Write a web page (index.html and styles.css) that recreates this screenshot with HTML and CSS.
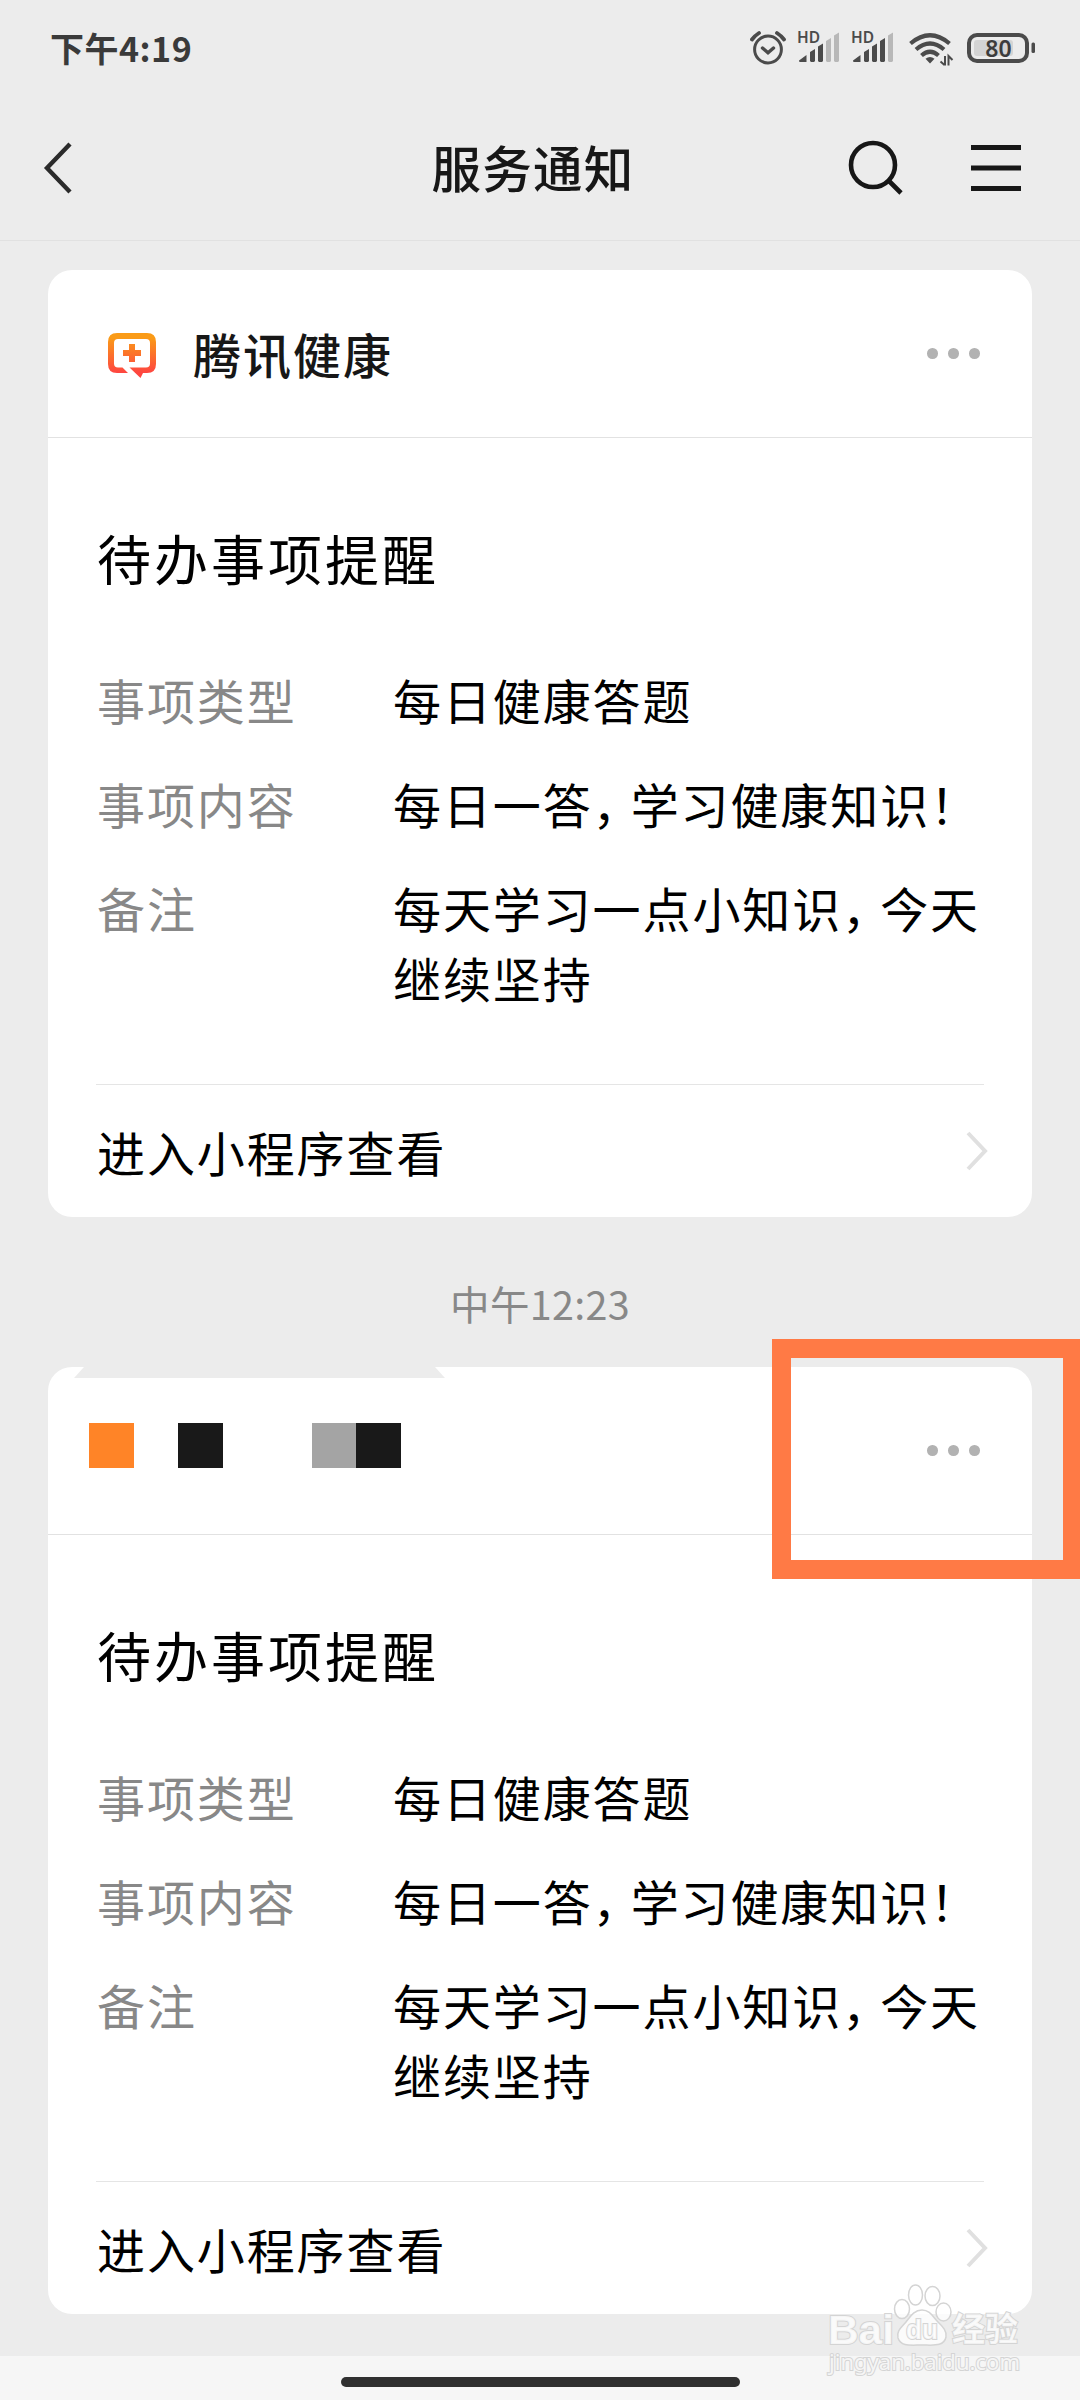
FILE: index.html
```html
<!DOCTYPE html>
<html lang="zh-CN">
<head>
<meta charset="utf-8">
<title>服务通知</title>
<link rel="stylesheet" href="styles.css">
</head>
<body>
<div class="screen">
  <header class="top">
    <div class="status">
      <span class="clock">下午4:19</span>
      <svg class="status-icons" viewBox="750 26 290 44" width="290" height="44">
        <g fill="none" stroke="#4b4b4b" stroke-width="3.4" stroke-linecap="round">
          <circle cx="768" cy="49.5" r="13.4" stroke-width="3"/>
          <path d="M762.5 48l5.5 4.8 5.5-4.8"/>
          <path d="M752 39.5q3-4 7-6.5M784 39.5q-3-4-7-6.5" stroke-width="3.8"/>
        </g>
        <g class="hd"><text x="797" y="43" textLength="23">HD</text><text x="851" y="43" textLength="23">HD</text></g>
        <g fill="#4b4b4b">
          <path d="M799 60.500l7.500-5.500v7h-6.500q-1 0-1-1.500z"/>
          <path d="M810 52l5-3v12l-1 1h-3l-1-1zM818 46.500l5-3v17.500l-1 1h-3l-1-1z"/>
          <path d="M826 41l5-3v23l-1 1h-3l-1-1zM834 35.500l5-3v28.500l-1 1h-3l-1-1z" fill="#b8b8b8"/>
          <path d="M853 60.500l7.500-5.500v7h-6.500q-1 0-1-1.500zM864 52l5-3v12l-1 1h-3l-1-1zM872 46.500l5-3v17.500l-1 1h-3l-1-1zM880 41l5-3v23l-1 1h-3l-1-1z"/>
          <path d="M888 35.500l5-3v28.500l-1 1h-3l-1-1z" fill="#b8b8b8"/>
        </g>
        <g fill="none" stroke="#4b4b4b" stroke-width="4.200">
          <path d="M910.500 43.500q19.500-16.500 39 0"/>
          <path d="M916 49.500q14-12 28 0"/>
          <path d="M921.500 55.500q8.500-7.500 17 0"/>
        </g>
        <path d="M925.500 58.800q4.500-3.600 9 0l-4.500 4.600z" fill="#4b4b4b"/>
        <path d="M945 56v9.500M940.500 61.500l4 3.500M948.500 65.500v-9.500l4 4" fill="none" stroke="#4b4b4b" stroke-width="2"/>
        <rect x="969" y="35" width="58" height="26" rx="8" fill="none" stroke="#4b4b4b" stroke-width="4"/>
        <rect x="974" y="40" width="39" height="16" rx="3" fill="#d4d4d4"/>
        <rect x="1031.500" y="42.500" width="3.500" height="10.500" rx="1.500" fill="#4b4b4b"/>
        <text class="level" x="998.500" y="56.500" text-anchor="middle">80</text>
      </svg>
    </div>
    <nav class="nav">
      <svg class="back" width="34" height="56" viewBox="0 0 34 56"><path d="M29 4L6 28l23 24" fill="none" stroke="#2b2b2b" stroke-width="4.400"/></svg>
      <h1>服务通知</h1>
      <div class="tools">
        <svg width="56" height="56" viewBox="0 0 56 56"><g fill="none" stroke="#171717" stroke-width="4.600"><circle cx="25" cy="25" r="22"/><path d="M40.500 40.500l12.500 12.500"/></g></svg>
        <svg width="50" height="46" viewBox="0 0 50 46"><path d="M0 0h50v5H0zM0 20.400h50v5.200H0zM0 41h50v5H0z" fill="#171717"/></svg>
      </div>
    </nav>
  </header>

  <main class="feed">
    <article class="card">
      <div class="card-head">
        <svg class="logo" width="48" height="46" viewBox="0 0 48 46">
          <defs><linearGradient id="warm" gradientUnits="userSpaceOnUse" x1="0" y1="0" x2="0" y2="44"><stop offset="0.100" stop-color="#fa9b17"/><stop offset="0.900" stop-color="#fe4640"/></linearGradient></defs>
          <path fill="url(#warm)" fill-rule="evenodd" d="M9 0h30q9 0 9 9v22q0 9-9 9h-4l-2.500 5L21.500 34.500H38q4 0 4-4V10q0-4-4-4H10q-4 0-4 4v20.500q0 4 4 4h4.500l5.500 5.500H9q-9 0-9-9V9q0-9 9-9z"/>
          <path d="M21 11h6v6h6v6h-6v6h-6v-6h-6v-6h6z" fill="url(#warm)"/>
        </svg>
        <span class="sender">腾讯健康</span>
        <span class="more"><i></i><i></i><i></i></span>
      </div>
      <div class="card-body">
        <h2>待办事项提醒</h2>
        <dl>
          <dt>事项类型</dt><dd>每日健康答题</dd>
          <dt>事项内容</dt><dd>每日一答<span class="comma">，</span>学习健康知识！</dd>
          <dt>备注</dt><dd>每天学习一点小知识<span class="comma">，</span>今天<br>继续坚持</dd>
        </dl>
        <div class="enter"><span>进入小程序查看</span><svg width="24" height="42" viewBox="0 0 24 42"><path d="M3 3l17 18L3 39" fill="none" stroke="#e0e0e0" stroke-width="4"/></svg></div>
      </div>
    </article>

    <time>中午12:23</time>

    <article class="card">
      <div class="notch"></div>
      <div class="card-head masked">
        <div class="mosaic"><i class="orange"></i><i></i><i class="dark"></i><i></i><i></i><i class="gray"></i><i class="dark"></i></div>
        <span class="more"><i></i><i></i><i></i></span>
      </div>
      <div class="card-body">
        <h2>待办事项提醒</h2>
        <dl>
          <dt>事项类型</dt><dd>每日健康答题</dd>
          <dt>事项内容</dt><dd>每日一答<span class="comma">，</span>学习健康知识！</dd>
          <dt>备注</dt><dd>每天学习一点小知识<span class="comma">，</span>今天<br>继续坚持</dd>
        </dl>
        <div class="enter"><span>进入小程序查看</span><svg width="24" height="42" viewBox="0 0 24 42"><path d="M3 3l17 18L3 39" fill="none" stroke="#e0e0e0" stroke-width="4"/></svg></div>
      </div>
    </article>
  </main>

  <footer class="home"><span></span></footer>

  <div class="highlight"></div>
  <svg class="watermark" width="210" height="110" viewBox="820 2276 210 110">
    <g fill="#fff" fill-opacity=".8" stroke="#d4d4d4" stroke-width="1.500">
      <ellipse cx="902" cy="2309" rx="7.500" ry="9.500"/>
      <ellipse cx="915.500" cy="2295" rx="7" ry="10"/>
      <ellipse cx="932.500" cy="2296" rx="7.500" ry="9.500"/>
      <ellipse cx="943.500" cy="2312" rx="7.500" ry="9"/>
      <path d="M922 2310c8 0 11 7 16 12s9 9 8 15c-2 10-13 8-24 8s-21 2-24-7c-2-7 4-11 8-16s8-12 16-12z"/>
      <g class="wm-text">
        <text class="wm-brand" x="828" y="2344" textLength="66" lengthAdjust="spacingAndGlyphs">Bai</text>
        <text class="wm-du" x="906" y="2339" textLength="32" lengthAdjust="spacingAndGlyphs">du</text>
        <text class="wm-cn" x="952" y="2341" textLength="66">经验</text>
        <text class="wm-url" x="829" y="2370" textLength="191" lengthAdjust="spacingAndGlyphs">jingyan.baidu.com</text>
      </g>
    </g>
  </svg>
</div>
</body>
</html>
```
FILE: styles.css
```css
* { box-sizing: border-box; margin: 0; padding: 0; }

body {
  background: #ececec;
  font-family: "Noto Sans CJK SC", sans-serif;
  color: #000;
}

svg { display: block; }
i { display: block; }

.screen {
  position: relative;
  width: 1080px;
  height: 2400px;
  overflow: hidden;
  display: flex;
  flex-direction: column;
}

.top { height: 241px; border-bottom: 1px solid #e1e1e1; }

.status {
  height: 96px;
  padding: 0 40px 0 50px;
  display: flex;
  align-items: center;
  justify-content: space-between;
}

.clock { font-size: 34px; font-weight: 700; color: #3a3a3a; line-height: 50px; letter-spacing: 0.5px; }
.hd { font: 600 15.5px "Noto Sans", sans-serif; fill: #4b4b4b; }
.level { font: 600 23px "Noto Sans", sans-serif; fill: #3c3c3c; }

.nav {
  height: 144px;
  padding: 0 59px 0 41px;
  display: grid;
  grid-template-columns: 200px 1fr 200px;
  align-items: center;
}

.nav h1 {
  margin-bottom: 3px;
  padding-left: 4px;
  font-size: 49.5px;
  font-weight: 500;
  line-height: 60px;
  letter-spacing: 1.2px;
  text-align: center;
  color: #171717;
}

.tools { display: flex; align-items: center; justify-content: flex-end; gap: 67px; }

.feed { flex: 1; padding: 29px 48px 0; }

.card {
  position: relative;
  height: 947px;
  border-radius: 24px;
  background: #fff;
}

.card-head {
  height: 168px;
  padding: 0 52px 0 60px;
  border-bottom: 1px solid #e2e2e2;
  display: flex;
  align-items: center;
}

.logo { margin-top: 4px; }

.sender {
  margin: 0 0 2px 37px;
  font-size: 48px;
  font-weight: 500;
  line-height: 60px;
  letter-spacing: 2px;
  color: #171717;
}

.more { margin-left: auto; display: flex; gap: 10.4px; }
.more i { width: 10.6px; height: 10.6px; border-radius: 50%; background: #b2b2b2; }

.card-body { padding: 80px 48px 0; }

.card-body h2 {
  padding-left: 1px;
  font-size: 54px;
  font-weight: 400;
  line-height: 80px;
  letter-spacing: 3px;
}

dl {
  height: 486px;
  padding: 66px 0 0 1px;
  display: grid;
  grid-template-columns: 296px 1fr;
  row-gap: 34px;
  align-content: start;
  font-size: 48px;
  line-height: 70px;
  letter-spacing: 1.9px;
  white-space: nowrap;
}

dt { color: #888; }
.comma { font-feature-settings: "halt"; letter-spacing: 14px; }

.enter {
  height: 133px;
  padding: 0 0 1px 1px;
  border-top: 1px solid #e5e5e5;
  display: flex;
  align-items: center;
  justify-content: space-between;
  font-size: 48px;
  letter-spacing: 1.9px;
}

.enter svg { margin-right: -5px; }

time {
  height: 150px;
  display: flex;
  align-items: center;
  justify-content: center;
  padding-top: 20px;
  font-size: 39.5px;
  letter-spacing: 0.3px;
  color: #888;
}

.masked { padding-left: 41px; }
.mosaic { display: flex; margin-bottom: 11px; }
.mosaic i { width: 44.5px; height: 45px; }
.mosaic .orange { background: #ff8427; }
.mosaic .dark { background: #191919; }
.mosaic .gray { background: #a4a4a4; }

.notch {
  position: absolute;
  left: 26px;
  top: 0;
  width: 371px;
  height: 11px;
  background: #ececec;
  clip-path: polygon(10px 0, 361px 0, 100% 100%, 0 100%);
}

.home {
  height: 44px;
  background: #f6f6f6;
  display: flex;
  justify-content: center;
  padding-top: 21px;
}

.home span { width: 399px; height: 10px; border-radius: 5px; background: #303030; }

.highlight {
  position: absolute;
  left: 772px;
  top: 1339px;
  width: 310px;
  height: 240px;
  border: 19px solid #ff7a45;
}

.watermark { position: absolute; left: 820px; top: 2276px; }
.wm-text { paint-order: stroke; stroke-width: 2px; }
.wm-brand { font: 700 41px "Liberation Sans", sans-serif; }
.wm-du { font: 700 27px "Liberation Sans", sans-serif; }
.wm-cn { font: 700 33px "Noto Sans CJK SC", sans-serif; }
.wm-url { font: 400 22px "Noto Sans", sans-serif; }
```
